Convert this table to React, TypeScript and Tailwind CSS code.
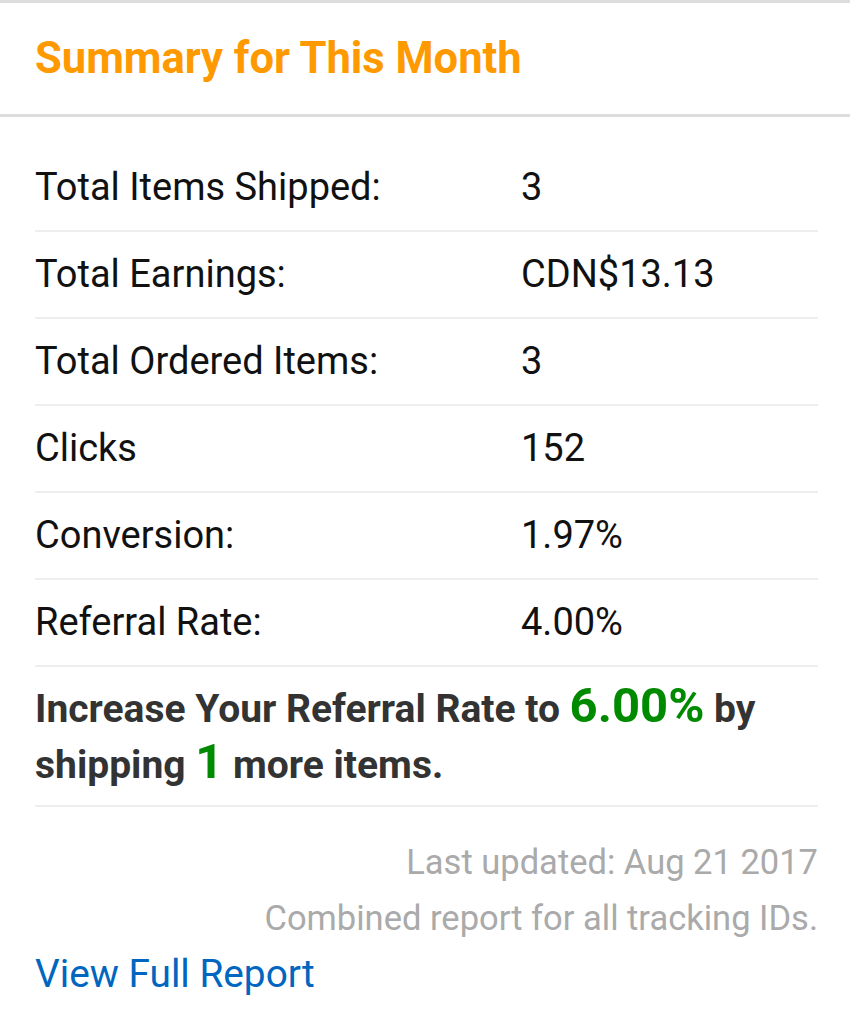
import React from "react";

const rows: [string, string][] = [
  ["Total Items Shipped:", "3"],
  ["Total Earnings:", "CDN$13.13"],
  ["Total Ordered Items:", "3"],
  ["Clicks", "152"],
  ["Conversion:", "1.97%"],
  ["Referral Rate:", "4.00%"],
];

export default function App() {
  return (
    <div
      className="w-[850px] h-[1032px] bg-white overflow-hidden"
      style={{ fontFamily: "Roboto, 'Noto Sans', sans-serif" }}
    >
      <div className="border-t-[3px] border-b-[3px] border-[#dddddd] h-[117px] pl-[35px] pr-[32px] flex items-center">
        <h1 className="text-[43.5px] font-bold text-[#ff9900] leading-none">
          Summary for This Month
        </h1>
      </div>
      <div className="pl-[35px] pr-[32px] pt-[28px]">
        {rows.map(([k, v]) => (
          <div
            key={k}
            className="h-[87px] border-b-2 border-[#eeeeee] flex items-center text-[38px] text-[#111111]"
          >
            <span className="w-[486px]">{k}</span>
            <span>{v}</span>
          </div>
        ))}
        <div className="pt-[14px] pb-[12px] border-b-2 border-[#eeeeee] text-[39px] font-bold text-[#333333]">
          <div className="h-[56px] leading-[56px] whitespace-nowrap">
            Increase Your Referral Rate to{" "}
            <span className="text-[49px] leading-none text-[#008a00]">6.00%</span> by
          </div>
          <div className="h-[56px] leading-[56px] whitespace-nowrap">
            shipping <span className="text-[49px] leading-none text-[#008a00]">1</span> more items.
          </div>
        </div>
        <div className="pt-[27px] text-right text-[34.5px] leading-[56px] text-[#aaaaaa]">
          <div>Last updated: Aug 21 2017</div>
          <div>Combined report for all tracking IDs.</div>
        </div>
        <div className="text-[38.8px] leading-[56px] text-[#0066c0]">View Full Report</div>
      </div>
    </div>
  );
}
